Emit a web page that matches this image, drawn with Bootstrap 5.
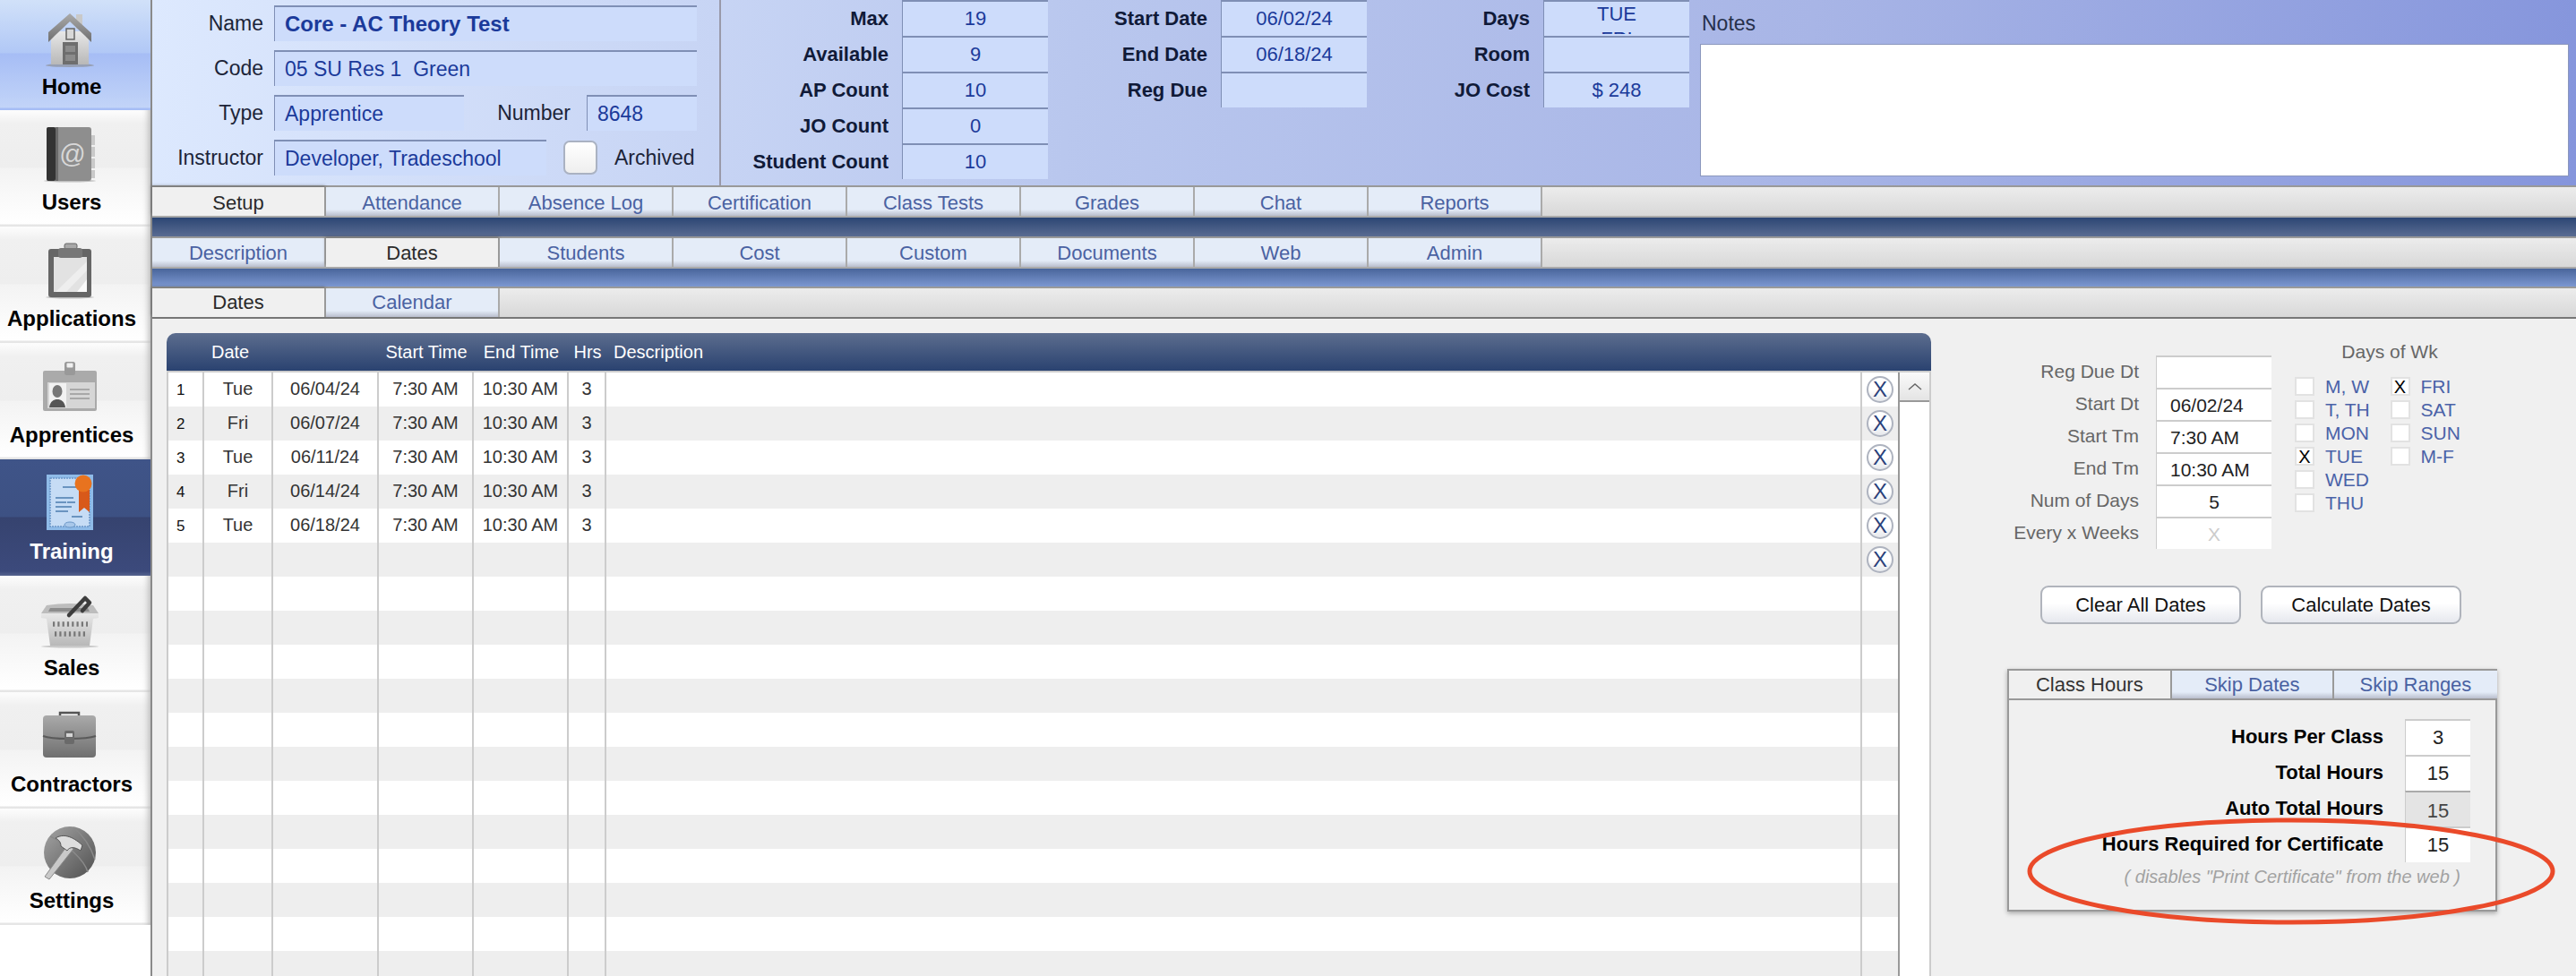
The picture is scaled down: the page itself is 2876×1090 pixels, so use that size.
<!DOCTYPE html>
<html lang="en">
<head>
  <meta charset="UTF-8">
  <meta name="viewport" content="width=device-width, initial-scale=1.0">
  <title>Training - Dates</title>
  <link href="https://cdn.jsdelivr.net/npm/bootstrap@5.3.0/dist/css/bootstrap.min.css" rel="stylesheet">
  <style>
    body { font-family: "Liberation Sans", Arial, sans-serif; background: #f0f0f0; height: 1090px; overflow: hidden; color: #222; }
    .app-shell { height: 1090px; }

    /* left menu */
    .side-menu { width: 170px; flex: none; background: #fff; border-right: 2px solid #8a8a8a; }
    .menu-item { display: block; flex: none; height: 130px; padding: 17px 8px 0 0; text-align: center; color: #000; font-size: 24px; font-weight: 700; line-height: 42px; text-decoration: none;
      background: linear-gradient(#fdfdfd 0, #f0f0f0 15px, #eeeeee 64px, #f3f3f3 65px, #ffffff 127px, #e6e6e6 128px, #e6e6e6 130px);
      box-shadow: inset -9px 0 7px -7px #b5b5b5; }
    .menu-item svg { display: block; margin: 0 auto 1px; overflow: visible; }
    .menu-home { height: 123px; padding-top: 11px; color: #000;
      background: linear-gradient(#d1e1f9 0, #b1c8f6 59px, #a6bdf5 60px, #c2d4f8 120px, #a6bdf5 121px); box-shadow: none; }
    .menu-active { color: #fff; background: linear-gradient(#3f5488 0, #3d5183 64px, #36436f 65px, #3c4a7c 125px, #56648f 130px); box-shadow: none; }

    /* record header */
    .rec-head { height: 207px; flex: none; background: linear-gradient(97deg, #dde9fe 0, #b9c7ee 38%, #a8b5e6 68%, #8595dc 100%); font-size: 23px; }
    .rec-left { width: 633px; padding: 6px 25px 0 0; flex: none; }
    .rec-row { display: flex; align-items: center; height: 40px; margin-bottom: 10px; }
    .rec-label { width: 124px; text-align: right; margin-right: 12px; color: #1c2438; flex: none; }
    .rec-field { height: 40px; line-height: 38px; padding-left: 11px; background: #cddcfb; color: #1b3a9a; border-top: 2px solid #7f8fb5; border-left: 1px solid #7f8fb5; white-space: pre; }
    .rec-check { width: 38px; height: 38px; margin: 0 19px; border: 2px solid #aab2c2; border-radius: 7px; background: linear-gradient(#fff, #eee); flex: none; }
    .stat-wrap { border-left: 2px solid #99a; height: 207px; flex: none; }
    .stat-col { flex: none; font-size: 22px; font-weight: 700; color: #101a38; }
    .stat-row { display: flex; height: 40px; align-items: center; }
    .stat-name { flex-grow: 1; text-align: right; padding-right: 15px; }
    .stat-val { width: 163px; flex: none; height: 40px; overflow: hidden; text-align: center; font-weight: 400; line-height: 38px; background: #cddcfb; color: #1b3a9a; border-top: 2px solid #7f8fb5; border-left: 1px solid #7f8fb5; }
    .stat-clip { height: 36px; overflow: hidden; line-height: 28px; }
    .notes-box { margin-left: 12px; width: 970px; flex: none; font-size: 23px; color: #26304a; }
    .notes-name { height: 49px; line-height: 52px; padding-left: 2px; }
    .notes-area { height: 148px; background: #fff; border: 1px solid #8b97bd; }

    /* tab strips */
    .strip { height: 36px; flex: none; border-top: 2px solid #999; flex-wrap: nowrap; background: linear-gradient(#ececec, #d8d8d8); border-bottom: 2px solid #aaa; }
    .strip-last { border-bottom-color: #777; }
    .strip .nav-link { width: 194px; height: 32px; flex: none; padding: 0; text-align: center; line-height: 32px; font-size: 22px; color: #4a62a2; border-right: 2px solid #aaa;
      background: linear-gradient(#e4ecf8 0, #e4ecf8 25px, #b9becd 32px); }
    .strip-first .nav-link { line-height: 36px; }
    .strip-second .nav-link { line-height: 34px; }
    .strip .nav-link.active-tab { background: #f0f0f0; color: #2a2a2a; box-shadow: -1px -2px 3px rgba(60,60,60,.35); border-right-color: #999; }
    .band-dark { height: 21px; flex: none; background: linear-gradient(#2c4674, #5a6c92); }
    .band-light { height: 20px; flex: none; background: linear-gradient(#49659b, #7c97d1); }

    /* dates grid */
    .grid-wrap { width: 1986px; flex: none; padding: 16px 0 0 16px; }
    .table.date-grid { width: 1970px; table-layout: fixed; border-collapse: separate; border-spacing: 0; margin: 0; }
    .table.date-grid th { height: 44px; padding: 0; font-size: 20px; font-weight: 400; color: #fff; text-align: center; vertical-align: middle; border: 0; border-bottom: 2px solid #ccc; background: linear-gradient(#5c6d8e, #2a4270); box-shadow: none; }
    .table.date-grid th.text-start { text-align: left; padding-left: 8px; }
    .table.date-grid th:first-child { border-top-left-radius: 10px; }
    .table.date-grid th:last-child { border-top-right-radius: 10px; }
    .table.date-grid td { height: 38px; padding: 0 0 2px; font-size: 20px; font-weight: 400; color: #333; text-align: center; border: 0; border-right: 2px solid #ccc; background: #fff; box-shadow: none; vertical-align: middle; }
    .table.date-grid tr:nth-child(even) td { background: #eeeeee; }
    .table.date-grid td:first-child { border-left: 2px solid #ccc; text-align: left; padding-left: 9px; padding-top: 4px; font-size: 17px; color: #111; }
    .table.date-grid td.close-cell { padding: 0; border-right: 2px solid #999; }
    .table.date-grid td.scroll-cell { padding: 0; vertical-align: top; background: #fff; border-right: 2px solid #ccc; }
    .close-btn { display: flex; align-items: center; justify-content: center; width: 30px; height: 30px; margin: 0 auto 0 5px; border: 2px solid #aeb3bf; border-radius: 50%; background: linear-gradient(#fff 50%, #e6e8ec); color: #2a3f7a; font-size: 24px; line-height: 1; }
    .scroll-up { height: 33px; display: flex; align-items: center; justify-content: center; background: linear-gradient(#fafafa, #e4e4e4); border-bottom: 2px solid #999; }

    /* right panel */
    .side-form { font-size: 21px; color: #666; }
    .form-top { margin: 18px 0 0 0; height: 238px; }
    .date-col { width: 380px; margin-top: 23px; flex: none; }
    .date-row { display: flex; height: 36px; }
    .date-name { width: 232px; text-align: right; line-height: 36px; margin-right: 19px; flex: none; }
    .date-val { width: 129px; flex: none; padding-left: 15px; background: #fff; color: #222; line-height: 36px; border-top: 2px solid #ccc; border-left: 1px solid #ccc; }
    .week-col { margin-left: 26px; width: 220px; flex: none; }
    .week-title { height: 47px; line-height: 38px; text-align: center; width: 212px; }
    .week-row { display: flex; height: 26px; align-items: flex-start; color: #4a62a8; line-height: 22px; }
    .week-cell { display: flex; width: 106.5px; flex: none; }
    .week-box { width: 22px; height: 21px; margin-right: 12px; border: 2px solid #e2e2e2; background: #fff; color: #000; font-size: 20px; line-height: 18px; text-align: center; flex: none; }
    .act-row { margin: 42px 0 0 122px; gap: 22px; }
    .act-btn { width: 224px; height: 43px; padding: 0; font-size: 22px; color: #111; border: 2px solid #b0b4bc; border-radius: 9px; background: linear-gradient(#fff 45%, #e6e8ee); }
    .hours-box { position: relative; width: 547px; height: 271px; margin: 50px 0 0 85px; background: #f0f0f0; border: 2px solid #999; box-shadow: 0 2px 5px rgba(0,0,0,.3); }
    .hours-tabs { height: 33px; border-bottom: 2px solid #999; flex-wrap: nowrap; }
    .hours-tabs .nav-link { width: 181.6px; height: 31px; flex: none; padding: 0; text-align: center; font-size: 22px; line-height: 31px; color: #4a62a2; border-right: 2px solid #999; background: linear-gradient(#e4ecf8 0, #e4ecf8 24px, #b9becd 31px); }
    .hours-tabs li:last-child .nav-link { border-right: 0; }
    .hours-tabs .nav-link.active-tab { background: #f0f0f0; color: #333; }
    .hours-body { padding-top: 21px; }
    .hours-row { display: flex; height: 40px; align-items: center; }
    .hours-name { width: 418px; padding-bottom: 2px; text-align: right; margin-right: 24px; font-size: 22px; font-weight: 700; color: #000; flex: none; }
    .hours-val { width: 73px; height: 40px; background: #fff; color: #222; font-size: 22px; line-height: 38px; text-align: center; border-top: 2px solid #ccc; border-left: 1px solid #ccc; flex: none; }
    .hours-auto { background: #e4e4e4; border-top-color: #aaa; color: #444; line-height: 42px; }
    .hours-hint { width: 504px; margin-top: 1px; text-align: right; font-size: 20px; font-style: italic; color: #a2a2a2; }
    .red-ring { position: absolute; left: 20px; top: 164px; pointer-events: none; }
  </style>
</head>
<body>
<div class="app-shell d-flex">

  <!-- left menu -->
  <nav class="side-menu d-flex flex-column">
    <a class="menu-item menu-home" href="#">
      <svg width="64" height="64" viewBox="0 0 64 64" style="margin-left:48px">
        <defs>
          <linearGradient id="grayA" x1="0" y1="0" x2="0" y2="1"><stop offset="0" stop-color="#aaa"/><stop offset="1" stop-color="#6f6f6f"/></linearGradient>
          <linearGradient id="grayB" x1="0" y1="0" x2="0" y2="1"><stop offset="0" stop-color="#e8e8e8"/><stop offset="1" stop-color="#b8b8b8"/></linearGradient>
          <linearGradient id="grayC" x1="0" y1="0" x2="1" y2="1"><stop offset="0" stop-color="#a5a5a5"/><stop offset="1" stop-color="#4f4f4f"/></linearGradient>
        </defs>
        <ellipse cx="30" cy="62" rx="27" ry="2" fill="#888" opacity=".6"/>
        <rect x="37" y="5" width="7" height="16" fill="#c9c9c9"/>
        <rect x="9" y="24" width="42" height="37" fill="url(#grayB)"/>
        <path d="M30 4 L54 26 L54 36 L47 29 L30 13 L13 29 L6 36 L6 25 Z" fill="url(#grayA)"/>
        <rect x="26" y="21" width="9" height="12" fill="#d8d8d8" stroke="#666" stroke-width="1.5"/>
        <rect x="22" y="36" width="17" height="25" fill="#6e6e6e"/>
        <rect x="25" y="40" width="11" height="7" fill="#8b8b8b"/>
        <rect x="25" y="50" width="11" height="7" fill="#8b8b8b"/>
      </svg>
      Home
    </a>
    <a class="menu-item" href="#">
      <svg width="64" height="64" viewBox="0 0 64 64" style="margin-left:48px">
        <ellipse cx="30" cy="62" rx="29" ry="1.5" fill="#999" opacity=".6"/>
        <rect x="52" y="11" width="6" height="11" fill="#c9c9c9"/><rect x="52" y="24" width="6" height="11" fill="#c9c9c9"/>
        <rect x="52" y="37" width="6" height="11" fill="#c9c9c9"/><rect x="52" y="50" width="6" height="9" fill="#c9c9c9"/>
        <rect x="4" y="2" width="50" height="60" rx="3" fill="#8e8e8e"/>
        <rect x="4" y="2" width="10" height="60" rx="2" fill="#333"/>
        <rect x="14" y="2" width="3" height="60" fill="#6a6a6a"/>
        <text x="33" y="42" font-size="29" text-anchor="middle" fill="#d8d8d8" font-family="Liberation Sans, sans-serif" font-weight="400">@</text>
      </svg>
      Users
    </a>
    <a class="menu-item" href="#">
      <svg width="64" height="64" viewBox="0 0 64 64" style="margin-left:48px">
        <ellipse cx="30" cy="62" rx="27" ry="1.5" fill="#999" opacity=".6"/>
        <rect x="6" y="8" width="48" height="54" rx="3" fill="#666"/>
        <path d="M12 17 H49 V56 H12 Z" fill="#e2e2e2"/>
        <path d="M49 42 V56 H38 Z" fill="#fafafa"/>
        <path d="M14 56 L49 22 V32 L26 56 Z" fill="#eeeeee"/>
        <rect x="24" y="2" width="14" height="6" rx="2" fill="#a8a8a8" stroke="#666"/>
        <rect x="17" y="7" width="27" height="11" rx="3" fill="#777"/>
      </svg>
      Applications
    </a>
    <a class="menu-item" href="#">
      <svg width="64" height="64" viewBox="0 0 64 64" style="margin-left:48px">
        <rect x="0" y="14" width="60" height="45" rx="2" fill="#aaa"/>
        <rect x="5" y="27" width="53" height="29" fill="#d6d6d6"/>
        <rect x="7" y="28" width="19" height="27" fill="#f2f2f2"/>
        <ellipse cx="16" cy="37" rx="5.5" ry="7" fill="#777"/>
        <path d="M7 55 C8 48 12 46 16 46 C20 46 24 48 25 55 Z" fill="#555"/>
        <path d="M30 35 H52 M30 40 H52 M30 45 H52" stroke="#999" stroke-width="1.6"/>
        <rect x="24" y="4" width="12" height="15" rx="2.5" fill="#999"/>
        <rect x="26.5" y="5.5" width="7" height="5" rx="1" fill="#f0f0f0"/>
      </svg>
      Apprentices
    </a>
    <a class="menu-item menu-active" href="#">
      <svg width="64" height="64" viewBox="0 0 64 64" style="margin-left:48px">
        <rect x="4" y="0" width="52" height="62" fill="#8fbbe8"/>
        <rect x="8" y="4" width="44" height="54" fill="#c6dcf5" stroke="#6b97c7" stroke-dasharray="2 1" stroke-width="1.5"/>
        <path d="M22 14 H38 M14 26 H34 M14 31 H26 M27 31 H36 M14 36 H32 M14 41 H28 M32 47 H44" stroke="#6a94c0" stroke-width="2"/>
        <ellipse cx="30" cy="56" rx="6" ry="3" fill="#a9c8ea" stroke="#6b97c7"/>
        <path d="M40 17 H52 V42 L46 37 L40 42 Z" fill="#d8591a"/>
        <circle cx="45" cy="10" r="9.5" fill="#e8731f"/>
      </svg>
      Training
    </a>
    <a class="menu-item" href="#">
      <svg width="64" height="64" viewBox="0 0 64 64" style="margin-left:48px">
        <ellipse cx="30" cy="62" rx="32" ry="1.5" fill="#aaa" opacity=".6"/>
        <path d="M4 16 Q30 12 56 16 L62 25 H-2 Z" fill="#bdbdbd"/>
        <path d="M8 19 H50 L52 23 H6 Z" fill="#8c8c8c"/>
        <path d="M-2 25 H62 L62 30 L56 31 L52 61 H8 L4 31 L-2 30 Z" fill="url(#grayB)"/>
        <path d="M11 37 H50 M13 48 H48" stroke="#777" stroke-width="5.5" stroke-dasharray="2.2 3.1"/>
        <path d="M29 27 L47 8 L52 13 L44 22" fill="none" stroke="#3d3d3d" stroke-width="4.5" stroke-linecap="round" stroke-linejoin="round"/>
      </svg>
      Sales
    </a>
    <a class="menu-item" href="#">
      <svg width="64" height="64" viewBox="0 0 64 64" style="margin-left:48px">
        <path d="M19 10 V6 H40 V10" fill="none" stroke="#555" stroke-width="2.5"/>
        <rect x="0" y="9" width="59" height="47" rx="4" fill="url(#grayA)"/>
        <path d="M0 32 C10 36 48 36 59 32" fill="none" stroke="#5a5a5a" stroke-width="2"/>
        <rect x="24" y="26" width="11" height="15" rx="2" fill="#6a6a6a"/>
        <rect x="26" y="29" width="7" height="4" fill="#d5d5d5"/>
      </svg>
      Contractors
    </a>
    <a class="menu-item" href="#">
      <svg width="64" height="64" viewBox="0 0 64 64" style="margin-left:48px">
        <circle cx="30" cy="32" r="29" fill="url(#grayC)"/>
        <path d="M8 14 C26 22 46 40 50 54 M34 4 C46 14 54 28 58 40" fill="none" stroke="#8a8a8a" stroke-width="1.5"/>
        <path d="M2 59 L7 62 L34 28 L28 23 Z" fill="#c9c9c9" stroke="#8a8a8a"/>
        <path d="M14 16 C22 11 32 13 44 24 L42 30 C36 26 30 25 27 30 L20 25 C20 21 18 18 14 16 Z" fill="#ddd" stroke="#555"/>
      </svg>
      Settings
    </a>
  </nav>

  <main class="flex-grow-1 d-flex flex-column">
    <!-- record header -->
    <section class="rec-head d-flex">
      <div class="rec-left">
        <div class="rec-row"><div class="rec-label">Name</div><div class="rec-field flex-grow-1 fw-bold" style="font-size:24px">Core - AC Theory Test</div></div>
        <div class="rec-row"><div class="rec-label">Code</div><div class="rec-field flex-grow-1">05 SU Res 1  Green</div></div>
        <div class="rec-row">
          <div class="rec-label">Type</div><div class="rec-field" style="width:212px">Apprentice</div>
          <div class="text-end flex-grow-1" style="color:#1c2438;margin-right:18px">Number</div><div class="rec-field" style="width:123px">8648</div>
        </div>
        <div class="rec-row">
          <div class="rec-label">Instructor</div><div class="rec-field" style="width:304px">Developer, Tradeschool</div>
          <div class="rec-check"></div><div style="color:#1c2438">Archived</div>
        </div>
      </div>
      <div class="stat-wrap d-flex">
        <div class="stat-col" style="width:365px">
          <div class="stat-row"><div class="stat-name">Max</div><div class="stat-val">19</div></div>
          <div class="stat-row"><div class="stat-name">Available</div><div class="stat-val">9</div></div>
          <div class="stat-row"><div class="stat-name">AP Count</div><div class="stat-val">10</div></div>
          <div class="stat-row"><div class="stat-name">JO Count</div><div class="stat-val">0</div></div>
          <div class="stat-row"><div class="stat-name">Student Count</div><div class="stat-val">10</div></div>
        </div>
        <div class="stat-col" style="width:356px">
          <div class="stat-row"><div class="stat-name">Start Date</div><div class="stat-val">06/02/24</div></div>
          <div class="stat-row"><div class="stat-name">End Date</div><div class="stat-val">06/18/24</div></div>
          <div class="stat-row"><div class="stat-name">Reg Due</div><div class="stat-val"></div></div>
        </div>
        <div class="stat-col" style="width:360px">
          <div class="stat-row"><div class="stat-name">Days</div><div class="stat-val"><div class="stat-clip">TUE<br>FRI</div></div></div>
          <div class="stat-row"><div class="stat-name">Room</div><div class="stat-val"></div></div>
          <div class="stat-row"><div class="stat-name">JO Cost</div><div class="stat-val">$ 248</div></div>
        </div>
      </div>
      <div class="notes-box">
        <div class="notes-name">Notes</div>
        <div class="notes-area"></div>
      </div>
    </section>

    <!-- tabs -->
    <ul class="nav strip strip-first">
      <li><a class="nav-link active-tab" href="#">Setup</a></li>
      <li><a class="nav-link" href="#">Attendance</a></li>
      <li><a class="nav-link" href="#">Absence Log</a></li>
      <li><a class="nav-link" href="#">Certification</a></li>
      <li><a class="nav-link" href="#">Class Tests</a></li>
      <li><a class="nav-link" href="#">Grades</a></li>
      <li><a class="nav-link" href="#">Chat</a></li>
      <li><a class="nav-link" href="#">Reports</a></li>
    </ul>
    <div class="band-dark"></div>
    <ul class="nav strip strip-second">
      <li><a class="nav-link" href="#">Description</a></li>
      <li><a class="nav-link active-tab" href="#">Dates</a></li>
      <li><a class="nav-link" href="#">Students</a></li>
      <li><a class="nav-link" href="#">Cost</a></li>
      <li><a class="nav-link" href="#">Custom</a></li>
      <li><a class="nav-link" href="#">Documents</a></li>
      <li><a class="nav-link" href="#">Web</a></li>
      <li><a class="nav-link" href="#">Admin</a></li>
    </ul>
    <div class="band-light"></div>
    <ul class="nav strip strip-last">
      <li><a class="nav-link active-tab" href="#">Dates</a></li>
      <li><a class="nav-link" href="#">Calendar</a></li>
    </ul>

    <div class="d-flex flex-grow-1 overflow-hidden">
      <!-- dates grid -->
      <div class="grid-wrap">
        <table class="table date-grid">
          <colgroup>
            <col style="width:42px"><col style="width:77px"><col style="width:118px"><col style="width:106px"><col style="width:106px"><col style="width:42px"><col style="width:1402px"><col style="width:42px"><col style="width:35px">
          </colgroup>
          <thead>
            <tr><th></th><th colspan="2" class="text-start">Date</th><th>Start Time</th><th>End Time</th><th>Hrs</th><th class="text-start">Description</th><th></th><th></th></tr>
          </thead>
          <tbody>
            <tr><td>1</td><td>Tue</td><td>06/04/24</td><td>7:30 AM</td><td>10:30 AM</td><td>3</td><td></td><td class="close-cell"><span class="close-btn">X</span></td>
              <td class="scroll-cell" rowspan="18"><div class="scroll-up"><svg width="16" height="10" viewBox="0 0 16 10"><path d="M1 8 L8 2 L15 8" fill="none" stroke="#666" stroke-width="1.4"/></svg></div></td></tr>
            <tr><td>2</td><td>Fri</td><td>06/07/24</td><td>7:30 AM</td><td>10:30 AM</td><td>3</td><td></td><td class="close-cell"><span class="close-btn">X</span></td></tr>
            <tr><td>3</td><td>Tue</td><td>06/11/24</td><td>7:30 AM</td><td>10:30 AM</td><td>3</td><td></td><td class="close-cell"><span class="close-btn">X</span></td></tr>
            <tr><td>4</td><td>Fri</td><td>06/14/24</td><td>7:30 AM</td><td>10:30 AM</td><td>3</td><td></td><td class="close-cell"><span class="close-btn">X</span></td></tr>
            <tr><td>5</td><td>Tue</td><td>06/18/24</td><td>7:30 AM</td><td>10:30 AM</td><td>3</td><td></td><td class="close-cell"><span class="close-btn">X</span></td></tr>
            <tr><td></td><td></td><td></td><td></td><td></td><td></td><td></td><td class="close-cell"><span class="close-btn">X</span></td></tr>
            <tr><td></td><td></td><td></td><td></td><td></td><td></td><td></td><td class="close-cell"></td></tr>
            <tr><td></td><td></td><td></td><td></td><td></td><td></td><td></td><td class="close-cell"></td></tr>
            <tr><td></td><td></td><td></td><td></td><td></td><td></td><td></td><td class="close-cell"></td></tr>
            <tr><td></td><td></td><td></td><td></td><td></td><td></td><td></td><td class="close-cell"></td></tr>
            <tr><td></td><td></td><td></td><td></td><td></td><td></td><td></td><td class="close-cell"></td></tr>
            <tr><td></td><td></td><td></td><td></td><td></td><td></td><td></td><td class="close-cell"></td></tr>
            <tr><td></td><td></td><td></td><td></td><td></td><td></td><td></td><td class="close-cell"></td></tr>
            <tr><td></td><td></td><td></td><td></td><td></td><td></td><td></td><td class="close-cell"></td></tr>
            <tr><td></td><td></td><td></td><td></td><td></td><td></td><td></td><td class="close-cell"></td></tr>
            <tr><td></td><td></td><td></td><td></td><td></td><td></td><td></td><td class="close-cell"></td></tr>
            <tr><td></td><td></td><td></td><td></td><td></td><td></td><td></td><td class="close-cell"></td></tr>
            <tr><td></td><td></td><td></td><td></td><td></td><td></td><td></td><td class="close-cell"></td></tr>
          </tbody>
        </table>
      </div>

      <!-- right panel -->
      <aside class="side-form flex-grow-1">
        <div class="form-top d-flex">
          <div class="date-col">
            <div class="date-row"><div class="date-name">Reg Due Dt</div><div class="date-val"></div></div>
            <div class="date-row"><div class="date-name">Start Dt</div><div class="date-val">06/02/24</div></div>
            <div class="date-row"><div class="date-name">Start Tm</div><div class="date-val">7:30 AM</div></div>
            <div class="date-row"><div class="date-name">End Tm</div><div class="date-val">10:30 AM</div></div>
            <div class="date-row"><div class="date-name">Num of Days</div><div class="date-val text-center p-0">5</div></div>
            <div class="date-row"><div class="date-name">Every x Weeks</div><div class="date-val text-center p-0" style="color:#ccc">X</div></div>
          </div>
          <div class="week-col">
            <div class="week-title">Days of Wk</div>
            <div class="week-row"><div class="week-cell"><div class="week-box"></div>M, W</div><div class="week-cell"><div class="week-box">X</div>FRI</div></div>
            <div class="week-row"><div class="week-cell"><div class="week-box"></div>T, TH</div><div class="week-cell"><div class="week-box"></div>SAT</div></div>
            <div class="week-row"><div class="week-cell"><div class="week-box"></div>MON</div><div class="week-cell"><div class="week-box"></div>SUN</div></div>
            <div class="week-row"><div class="week-cell"><div class="week-box">X</div>TUE</div><div class="week-cell"><div class="week-box"></div>M-F</div></div>
            <div class="week-row"><div class="week-cell"><div class="week-box"></div>WED</div></div>
            <div class="week-row"><div class="week-cell"><div class="week-box"></div>THU</div></div>
          </div>
        </div>

        <div class="act-row d-flex">
          <button type="button" class="btn act-btn">Clear All Dates</button>
          <button type="button" class="btn act-btn">Calculate Dates</button>
        </div>

        <div class="hours-box">
          <ul class="nav hours-tabs">
            <li><a class="nav-link active-tab" href="#">Class Hours</a></li>
            <li><a class="nav-link" href="#">Skip Dates</a></li>
            <li><a class="nav-link" href="#">Skip Ranges</a></li>
          </ul>
          <div class="hours-body">
            <div class="hours-row"><div class="hours-name">Hours Per Class</div><div class="hours-val">3</div></div>
            <div class="hours-row"><div class="hours-name">Total Hours</div><div class="hours-val">15</div></div>
            <div class="hours-row"><div class="hours-name">Auto Total Hours</div><div class="hours-val hours-auto">15</div></div>
            <div class="hours-row"><div class="hours-name">Hours Required for Certificate</div><div class="hours-val">15</div></div>
            <div class="hours-hint">( disables "Print Certificate" from the web )</div>
          </div>
          <svg class="red-ring" width="590" height="120" viewBox="0 0 590 120"><ellipse cx="295" cy="60" rx="292" ry="57" fill="none" stroke="#ea4a2a" stroke-width="5"/></svg>
        </div>
      </aside>
    </div>
  </main>
</div>
<script src="https://cdn.jsdelivr.net/npm/bootstrap@5.3.0/dist/js/bootstrap.bundle.min.js"></script>
</body>
</html>
